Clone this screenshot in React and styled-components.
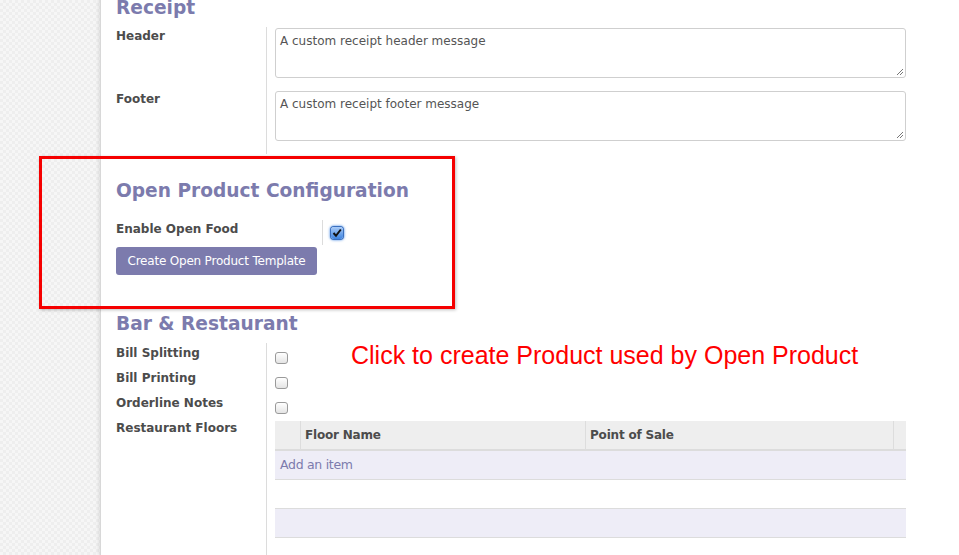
import React from "react";
import styled, { createGlobalStyle } from "styled-components";

const Global = createGlobalStyle`
  html, body { margin: 0; padding: 0; }
  body {
    width: 959px; height: 555px; overflow: hidden;
    font-family: "DejaVu Sans", "Liberation Sans", sans-serif;
    background-color: #f6f6f6;
    background-image:
      linear-gradient(45deg, #eeeeee 25%, transparent 25%, transparent 75%, #eeeeee 75%),
      linear-gradient(45deg, #eeeeee 25%, transparent 25%, transparent 75%, #eeeeee 75%);
    background-size: 6px 6px;
    background-position: 0 0, 3px 3px;
  }
`;

const Page = styled.div`
  display: flex;
  height: 555px;
  position: relative;
`;

const Gutter = styled.div`
  width: 100px;
  flex: none;
`;

const Sheet = styled.div`
  flex: 1;
  background: #fff;
  border-left: 1px solid #d8d8d8;
  box-shadow: -2px 0 3px rgba(0,0,0,0.08);
  padding: 0 53px 0 15px;
  margin-top: -5px;
`;

const Heading = styled.h2`
  margin: 0;
  font-size: 18.6px;
  font-weight: bold;
  color: #7c7bad;
  line-height: 26px;
  padding-top: ${p => p.$top || 0}px;
`;

const Group = styled.div`
  display: grid;
  grid-template-columns: ${p => p.$labelW || 150}px 1fr;
  margin-top: ${p => p.$mt || 0}px;
`;

const LabelCol = styled.div`
  display: flex;
  flex-direction: column;
  padding-top: ${p => p.$pt || 0}px;
`;

const Label = styled.div`
  font-size: 12px;
  font-weight: bold;
  color: #4c4c4c;
  height: ${p => p.$h || 25}px;
  line-height: 16px;
`;

const FieldCol = styled.div`
  border-left: 1px solid #dcdcdc;
  padding-left: 8px;
  padding-top: ${p => p.$pt || 0}px;
  display: flex;
  flex-direction: column;
  gap: ${p => p.$gap || 0}px;
  min-height: ${p => p.$minH || 0}px;
  box-sizing: border-box;
`;

const TextArea = styled.div`
  box-sizing: border-box;
  height: 50px;
  border: 1px solid #cfcfcf;
  border-radius: 3px;
  position: relative;
  padding: 4px 4px;
  font-size: 12px;
  line-height: 16px;
  color: #555;
`;

const Grip = styled.svg`
  position: absolute;
  right: 1px;
  bottom: 1px;
`;

const HighlightBox = styled.div`
  position: absolute;
  left: 39px;
  top: 156px;
  width: 410px;
  height: 147px;
  border: 3px solid #f50000;
  box-shadow: 1px 1px 3px rgba(0,0,0,0.25);
  pointer-events: none;
`;

const Button = styled.button`
  display: block;
  font-family: "DejaVu Sans", sans-serif;
  background: #7c7bad;
  color: #fff;
  border: none;
  border-radius: 3px;
  font-size: 12px;
  height: 28px;
  width: 201px;
  padding: 0;
  letter-spacing: -0.2px;
  margin-top: 2px;
`;

const CheckRow = styled.div`
  height: ${p => p.$h || 25}px;
  display: flex;
  align-items: ${p => (p.$top ? "flex-start" : "center")};
  padding-top: ${p => p.$pt || 0}px;
  box-sizing: border-box;
`;

const Box = styled.span`
  box-sizing: border-box;
  width: 13px;
  height: 12px;
  border: 1px solid #9a9a9a;
  border-radius: 3px;
  background: linear-gradient(#fff, #e4e4e4);
  display: inline-block;
  flex: none;
  margin-top: -1px;
`;

const CheckedBox = styled.span`
  width: 12px;
  height: 12px;
  border-radius: 3px;
  background: linear-gradient(#a9cbf7, #3d83e0);
  box-shadow: 0 0 0 1px #3a6fbf, 0 0 2px 2px rgba(90,150,230,0.55);
  display: inline-flex;
  align-items: center;
  justify-content: center;
`;

const Annotation = styled.span`
  font-family: "Liberation Sans", Arial, sans-serif;
  font-size: 25px;
  line-height: 25px;
  color: #ff0000;
  white-space: nowrap;
  margin-left: 63px;
  margin-top: -6px;
`;

const Table = styled.div`
  width: 631px;
`;

const HeadRow = styled.div`
  display: grid;
  grid-template-columns: 25px 285px 308px 13px;
  height: 28px;
  background: #eeeeee;
  border-bottom: 2px solid #dcdcdc;
`;

const HeadCell = styled.div`
  border-left: ${p => (p.$first ? "none" : "1px solid #dddddd")};
  font-size: 12px;
  font-weight: bold;
  color: #4c4c4c;
  padding-left: 4px;
  line-height: 29px;
  letter-spacing: -0.2px;
`;

const BodyRow = styled.div`
  height: 28px;
  background: ${p => (p.$tint ? "#eeedf7" : "#fff")};
  border-bottom: 1px solid #dcdcdc;
  font-size: 12.5px;
  color: #7c7bad;
  padding-left: 5px;
  line-height: 28px;
  letter-spacing: -0.3px;
`;

function ResizeGrip() {
  return (
    <Grip width="9" height="9" viewBox="0 0 9 9">
      <path d="M8 2 L2 8 M8 5 L5 8" stroke="#777" strokeWidth="1" />
    </Grip>
  );
}

export default function App() {
  return (
    <>
      <Global />
      <Page>
        <Gutter />
        <Sheet>
          <Heading>Receipt</Heading>
          <Group $mt={6}>
            <LabelCol $pt={1}>
              <Label $h={63}>Header</Label>
              <Label $h={63}>Footer</Label>
            </LabelCol>
            <FieldCol $gap={13} $minH={125} $pt={1}>
              <TextArea>
                A custom receipt header message
                <ResizeGrip />
              </TextArea>
              <TextArea>
                A custom receipt footer message
                <ResizeGrip />
              </TextArea>
            </FieldCol>
          </Group>

          <Heading $top={24}>Open Product Configuration</Heading>
          <Group $labelW={206} $mt={16}>
            <LabelCol $pt={1}>
              <Label $h={24}>Enable Open Food</Label>
            </LabelCol>
            <FieldCol>
              <CheckRow $h={24} $top $pt={7}>
                <CheckedBox>
                  <svg width="10" height="10" viewBox="0 0 10 10">
                    <path d="M1.5 5 L4 7.8 L8.8 1.5" stroke="#111" strokeWidth="2" fill="none" />
                  </svg>
                </CheckedBox>
              </CheckRow>
            </FieldCol>
          </Group>
          <Button>Create Open Product Template</Button>

          <Heading $top={36}>Bar &amp; Restaurant</Heading>
          <Group $mt={6}>
            <LabelCol $pt={2}>
              <Label>Bill Splitting</Label>
              <Label>Bill Printing</Label>
              <Label>Orderline Notes</Label>
              <Label>Restaurant Floors</Label>
            </LabelCol>
            <FieldCol $minH={220} $pt={3}>
              <CheckRow>
                <Box />
                <Annotation>Click to create Product used by Open Product</Annotation>
              </CheckRow>
              <CheckRow>
                <Box />
              </CheckRow>
              <CheckRow>
                <Box />
              </CheckRow>
              <Table>
                <HeadRow>
                  <HeadCell $first />
                  <HeadCell>Floor Name</HeadCell>
                  <HeadCell>Point of Sale</HeadCell>
                  <HeadCell />
                </HeadRow>
                <BodyRow $tint>Add an item</BodyRow>
                <BodyRow />
                <BodyRow $tint />
              </Table>
            </FieldCol>
          </Group>
        </Sheet>
        <HighlightBox />
      </Page>
    </>
  );
}
